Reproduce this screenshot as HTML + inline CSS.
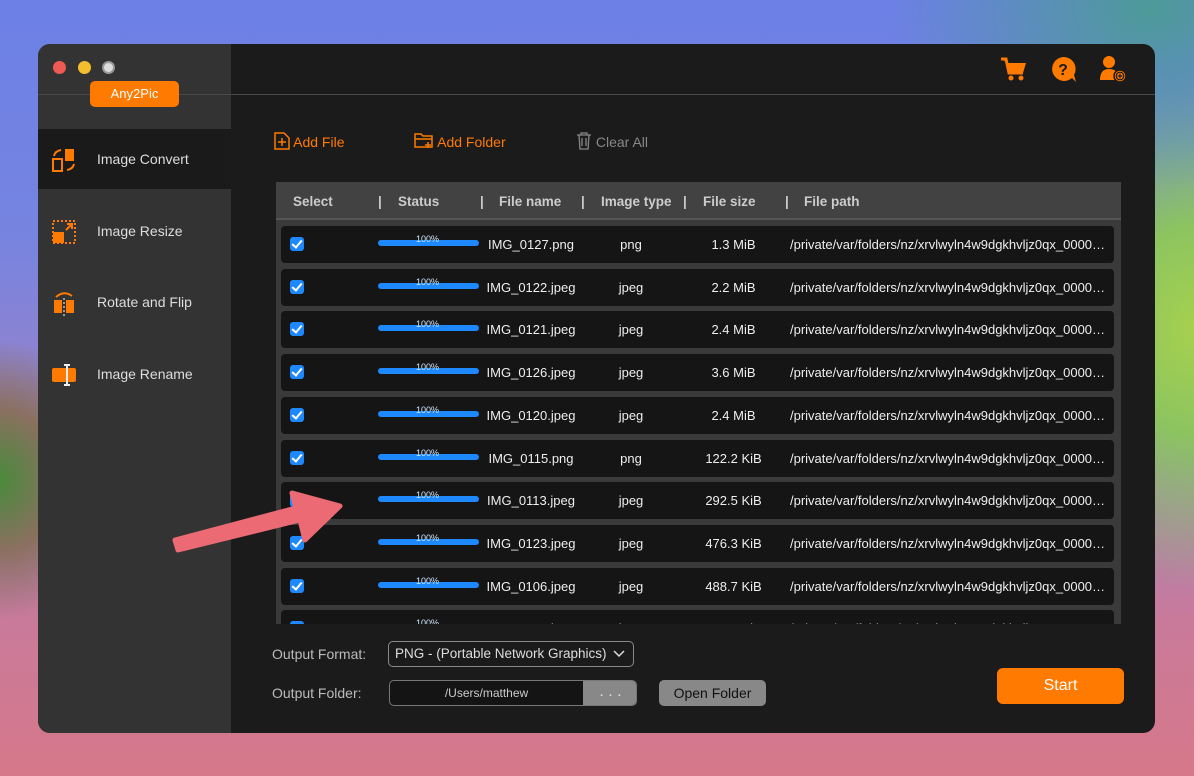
<!DOCTYPE html>
<html><head><meta charset="utf-8"><style>
*{margin:0;padding:0;box-sizing:border-box}
body{width:1194px;height:776px;overflow:hidden;position:relative;font-family:"Liberation Sans",sans-serif;
background:
radial-gradient(ellipse 260px 180px at 1150px 10px,#4d9a98 0%,rgba(77,154,152,0) 100%),
radial-gradient(ellipse 200px 260px at 1194px 330px,#a6d14e 0%,#8cc460 40%,rgba(140,196,96,0) 100%),
radial-gradient(ellipse 120px 140px at 0px 480px,#4a8a3c 0%,#8a7060 50%,rgba(138,112,96,0) 100%),
linear-gradient(180deg,#6c80e6 0%,#7684e0 30%,#9a82c8 55%,#c97a9a 80%,#d6788a 100%);}
.win{position:absolute;left:38px;top:44px;width:1117px;height:689px;border-radius:12px;overflow:hidden;background:#1b1b1b}
.side{position:absolute;left:0;top:0;width:193px;height:689px;background:#333}
.hline{position:absolute;left:0;top:50px;width:1117px;height:1px;background:#4a4a4a}
.dot{position:absolute;top:17px;width:13px;height:13px;border-radius:50%}
.brand{position:absolute;left:52px;top:37px;width:89px;height:26px;background:#ff7a00;border-radius:5px;color:#fff;font-size:13px;text-align:center;line-height:26px}
.nav{position:absolute;left:0;width:193px;height:60px;color:#ddd;font-size:14px}
.nav span{position:absolute;left:59px;top:22px}
.nav svg{position:absolute;left:13px;top:18px}
.tb{position:absolute;top:88px;font-size:14px;color:#ff7a00}
.table{position:absolute;left:238px;top:138px;width:845px;height:442px;background:#3a3a3a;overflow:hidden}
.th{position:absolute;left:0;top:0;width:845px;height:38px;background:#424242;color:#ccc;font-weight:bold;font-size:13.5px;border-bottom:2px solid #555}
.th span{position:absolute;top:12px}
.row{position:absolute;left:5px;width:833px;height:37px;background:#151515;border-radius:4px;color:#eee;font-size:13px}
.row>*{position:absolute}
.cb{left:9px;top:11px;width:14px;height:14px;background:#1e88ff;border-radius:3px}
.cb:after{content:"";position:absolute;left:4px;top:1px;width:4px;height:8px;border:solid #fff;border-width:0 2px 2px 0;transform:rotate(40deg)}
.bar{left:97px;top:14px;width:101px;height:6px;background:#1e88ff;border-radius:3px}
.pct{left:135px;top:8px;font-size:9px;color:#cfe4ff}
.lbl{position:absolute;color:#bbb;font-size:14px}
</style></head><body>
<div class="win">
<div class="side"></div>
<div class="hline"></div>
<div class="dot" style="left:15px;background:#f05a55"></div>
<div class="dot" style="left:40px;background:#f5be2c"></div>
<div class="dot" style="left:64px;background:#ddd;border:2px solid #999"></div>
<div class="brand">Any2Pic</div>
<div class="nav" style="top:85px;background:#1a1a1a"><svg width="26" height="26" viewBox="0 0 26 26"><rect x="2" y="12" width="9" height="12" fill="none" stroke="#ff7a00" stroke-width="2"/><rect x="14" y="2" width="9" height="12" fill="#ff7a00"/><path d="M3 9 Q4 4 10 3 M16 23 Q22 22 23 17" stroke="#ff7a00" stroke-width="2" fill="none"/></svg><span>Image Convert</span></div>
<div class="nav" style="top:157px"><svg width="26" height="26" viewBox="0 0 26 26"><rect x="2" y="2" width="22" height="22" fill="none" stroke="#ff7a00" stroke-width="2" stroke-dasharray="2 2"/><rect x="2" y="13" width="11" height="11" fill="#ff7a00"/><path d="M15 11 L21 5 M16 5 H21 V10" stroke="#ff7a00" stroke-width="2" fill="none"/></svg><span>Image Resize</span></div>
<div class="nav" style="top:228px"><svg width="26" height="26" viewBox="0 0 26 26"><rect x="3" y="10" width="8" height="13" fill="#ff7a00"/><rect x="15" y="10" width="8" height="13" fill="#ff7a00"/><path d="M13 8 V26" stroke="#fff" stroke-dasharray="2 2"/><path d="M5 7 Q13 0 21 6" stroke="#ff7a00" stroke-width="2" fill="none"/></svg><span>Rotate and Flip</span></div>
<div class="nav" style="top:300px"><svg width="28" height="26" viewBox="0 0 28 26"><rect x="1" y="6" width="24" height="14" rx="2" fill="#ff7a00"/><path d="M16 3 V23 M13 3 H19 M13 23 H19" stroke="#eee" stroke-width="2"/></svg><span>Image Rename</span></div>

<svg style="position:absolute;left:962px;top:12px" width="28" height="26" viewBox="0 0 28 26"><path d="M1 3 H6 L9 17 H23 L26 7 H8" fill="#ff7a00"/><path d="M1 3 H6 L9 17 H23" stroke="#ff7a00" stroke-width="3" fill="none"/><circle cx="11" cy="22" r="2.5" fill="#ff7a00"/><circle cx="21" cy="22" r="2.5" fill="#ff7a00"/></svg>
<svg style="position:absolute;left:1012px;top:12px" width="28" height="28" viewBox="0 0 28 28"><path d="M13 1 A12 12 0 1 0 22 22 L26 26 L24 19 A12 12 0 0 0 13 1Z" fill="#ff7a00"/><text x="13" y="19" font-size="16" font-family="Liberation Sans" font-weight="bold" text-anchor="middle" fill="#1b1b1b">?</text></svg>
<svg style="position:absolute;left:1061px;top:10px" width="30" height="30" viewBox="0 0 30 30"><circle cx="10" cy="8" r="6" fill="#ff7a00"/><path d="M1 26 Q1 15 10 15 Q17 15 18 20 V26Z" fill="#ff7a00"/><circle cx="21" cy="22" r="6" fill="#ff7a00" stroke="#1b1b1b" stroke-width="1.5"/><circle cx="21" cy="22" r="3.8" fill="none" stroke="#1b1b1b" stroke-width="1.2"/><path d="M21 19.5 V24.5 M18.5 22 H23.5" stroke="#1b1b1b" stroke-width="1.2"/></svg>

<div class="tb" style="left:236px"><svg width="16" height="18" viewBox="0 0 16 18" style="vertical-align:-3px"><path d="M1 1 H10 L15 6 V17 H1Z" fill="none" stroke="#ff7a00" stroke-width="1.5"/><path d="M8 6 V14 M4 10 H12" stroke="#ff7a00" stroke-width="1.5"/></svg> Add File</div>
<div class="tb" style="left:376px"><svg width="20" height="18" viewBox="0 0 20 18" style="vertical-align:-3px"><path d="M1 2 H7 L9 4 H18 V15 H1Z" fill="none" stroke="#ff7a00" stroke-width="1.5"/><path d="M1 7 H18 M14 10 V16 M11 13 H17" stroke="#ff7a00" stroke-width="1.5"/></svg> Add Folder</div>
<div class="tb" style="left:538px;color:#888"><svg width="16" height="18" viewBox="0 0 16 18" style="vertical-align:-3px"><path d="M1 3 H15 M5 3 V1 H11 V3 M3 3 L4 17 H12 L13 3 M6 6 V14 M10 6 V14" fill="none" stroke="#888" stroke-width="1.3"/></svg> Clear All</div>

<div class="table">
<div class="th"><span style="left:17px">Select</span><span style="left:102px">|</span><span style="left:122px">Status</span><span style="left:204px">|</span><span style="left:223px">File name</span><span style="left:305px">|</span><span style="left:325px">Image type</span><span style="left:407px">|</span><span style="left:427px">File size</span><span style="left:509px">|</span><span style="left:528px">File path</span></div>
</div>
<div class="lbl" style="left:234px;top:602px">Output Format:</div>
<div style="position:absolute;left:350px;top:597px;width:246px;height:26px;border:1px solid #888;border-radius:5px;color:#ddd;font-size:13.5px;line-height:24px;padding-left:6px">PNG - (Portable Network Graphics)<svg style="position:absolute;right:8px;top:8px" width="12" height="8"><path d="M1 1 L6 6 L11 1" stroke="#ddd" stroke-width="1.5" fill="none"/></svg></div>
<div class="lbl" style="left:234px;top:641px">Output Folder:</div>
<div style="position:absolute;left:351px;top:636px;width:248px;height:26px;border:1px solid #777;border-radius:5px;overflow:hidden;background:#141414"><div style="position:absolute;left:0;width:193px;text-align:center;color:#ccc;font-size:12px;line-height:24px">/Users/matthew</div><div style="position:absolute;left:193px;width:55px;height:26px;background:#888;color:#ddd;text-align:center;line-height:22px">. . .</div></div>
<div style="position:absolute;left:621px;top:636px;width:107px;height:26px;background:#888;border-radius:5px;color:#111;font-size:14px;text-align:center;line-height:26px">Open Folder</div>
<div style="position:absolute;left:959px;top:624px;width:127px;height:36px;background:#ff7a00;border-radius:6px;color:#fff;font-size:16px;text-align:center;line-height:36px">Start</div>
</div>
<svg style="position:absolute;left:0;top:0" width="1194" height="776"><path d="M178 550 L300 520 L305 540 L340 506 L292 493 L296 508 L175 540Z" fill="#ec6a74" stroke="#ec6a74" stroke-width="5" stroke-linejoin="round"/></svg>
<script>
var d=[["IMG_0127.png","png","1.3 MiB"],["IMG_0122.jpeg","jpeg","2.2 MiB"],["IMG_0121.jpeg","jpeg","2.4 MiB"],["IMG_0126.jpeg","jpeg","3.6 MiB"],["IMG_0120.jpeg","jpeg","2.4 MiB"],["IMG_0115.png","png","122.2 KiB"],["IMG_0113.jpeg","jpeg","292.5 KiB"],["IMG_0123.jpeg","jpeg","476.3 KiB"],["IMG_0106.jpeg","jpeg","488.7 KiB"],["IMG_0107.jpeg","jpeg","496.5 KiB"]];
var t=document.querySelector('.table'),h='';
d.forEach(function(r,i){h+='<div class="row" style="top:'+(44+i*42.7)+'px"><div class="cb"></div><div class="bar"></div><div class="pct">100%</div><div style="left:205px;top:11px;width:90px;text-align:center">'+r[0]+'</div><div style="left:310px;top:11px;width:80px;text-align:center">'+r[1]+'</div><div style="left:410px;top:11px;width:85px;text-align:center">'+r[2]+'</div><div style="left:509px;top:11px">/private/var/folders/nz/xrvlwyln4w9dgkhvljz0qx_0000…</div></div>'});
t.insertAdjacentHTML('beforeend',h);
</script>
</body></html>
